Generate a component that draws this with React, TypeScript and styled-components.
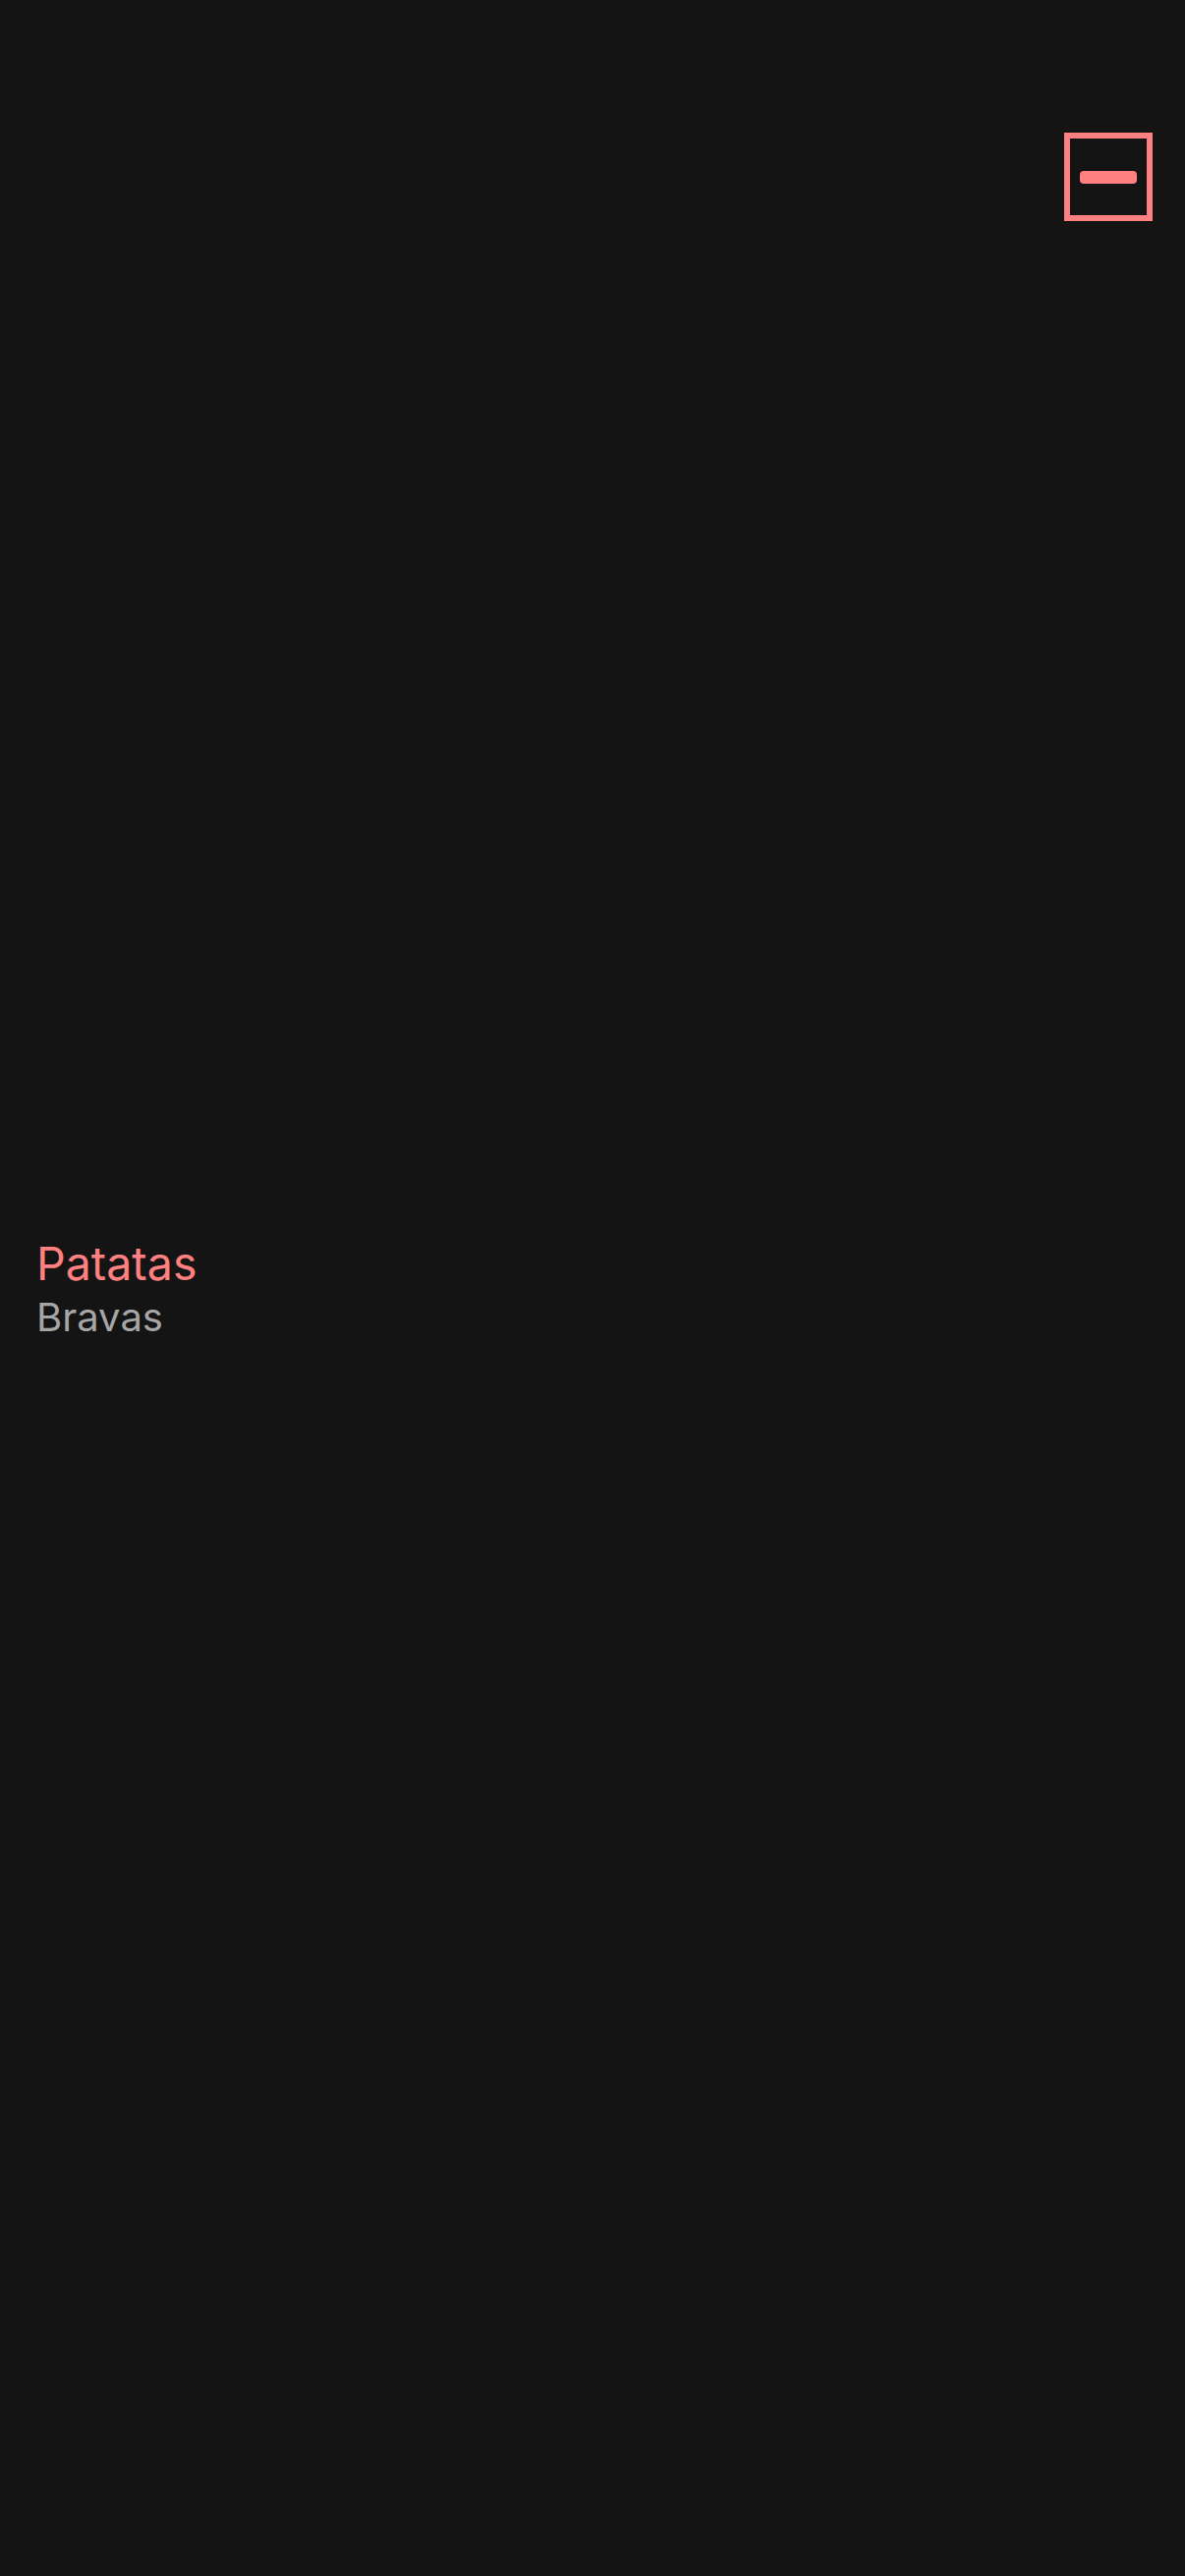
import React from "react";
import styled, { createGlobalStyle } from "styled-components";

const Global = createGlobalStyle`
  html, body { margin: 0; padding: 0; background: #141414; }
  body { font-family: Inter, "Noto Sans", sans-serif; }
`;

const Page = styled.div`
  min-height: 100vh;
  display: grid;
  grid-template-rows: 1fr auto 1fr;
  background: #141414;
`;

const Header = styled.header`
  display: flex;
  justify-content: flex-end;
  align-items: flex-start;
  padding: 135px 33px 0 0;
`;

const MenuButton = styled.button`
  width: 90px;
  height: 90px;
  box-sizing: border-box;
  border: 6px solid #ff8080;
  background: transparent;
  padding: 0;
  display: flex;
  align-items: center;
  justify-content: center;
  cursor: pointer;
`;

const Bar = styled.span`
  display: block;
  width: 58px;
  height: 13px;
  border-radius: 4px;
  background: #ff8080;
`;

const Title = styled.div`
  padding: 4px 0 0 37px;
  display: flex;
  flex-direction: column;
`;

const Line = styled.span<{ $accent?: boolean }>`
  font-size: ${(p) => (p.$accent ? "46.5px" : "40px")};
  line-height: ${(p) => (p.$accent ? "56px" : "54px")};
  color: ${(p) => (p.$accent ? "#ff8080" : "#a6a6a6")};
  font-weight: 400;
`;

export default function App() {
  return (
    <>
      <Global />
      <Page>
        <Header>
          <MenuButton aria-label="menu">
            <Bar />
          </MenuButton>
        </Header>
        <Title>
          <Line $accent>Patatas</Line>
          <Line>Bravas</Line>
        </Title>
        <div />
      </Page>
    </>
  );
}
